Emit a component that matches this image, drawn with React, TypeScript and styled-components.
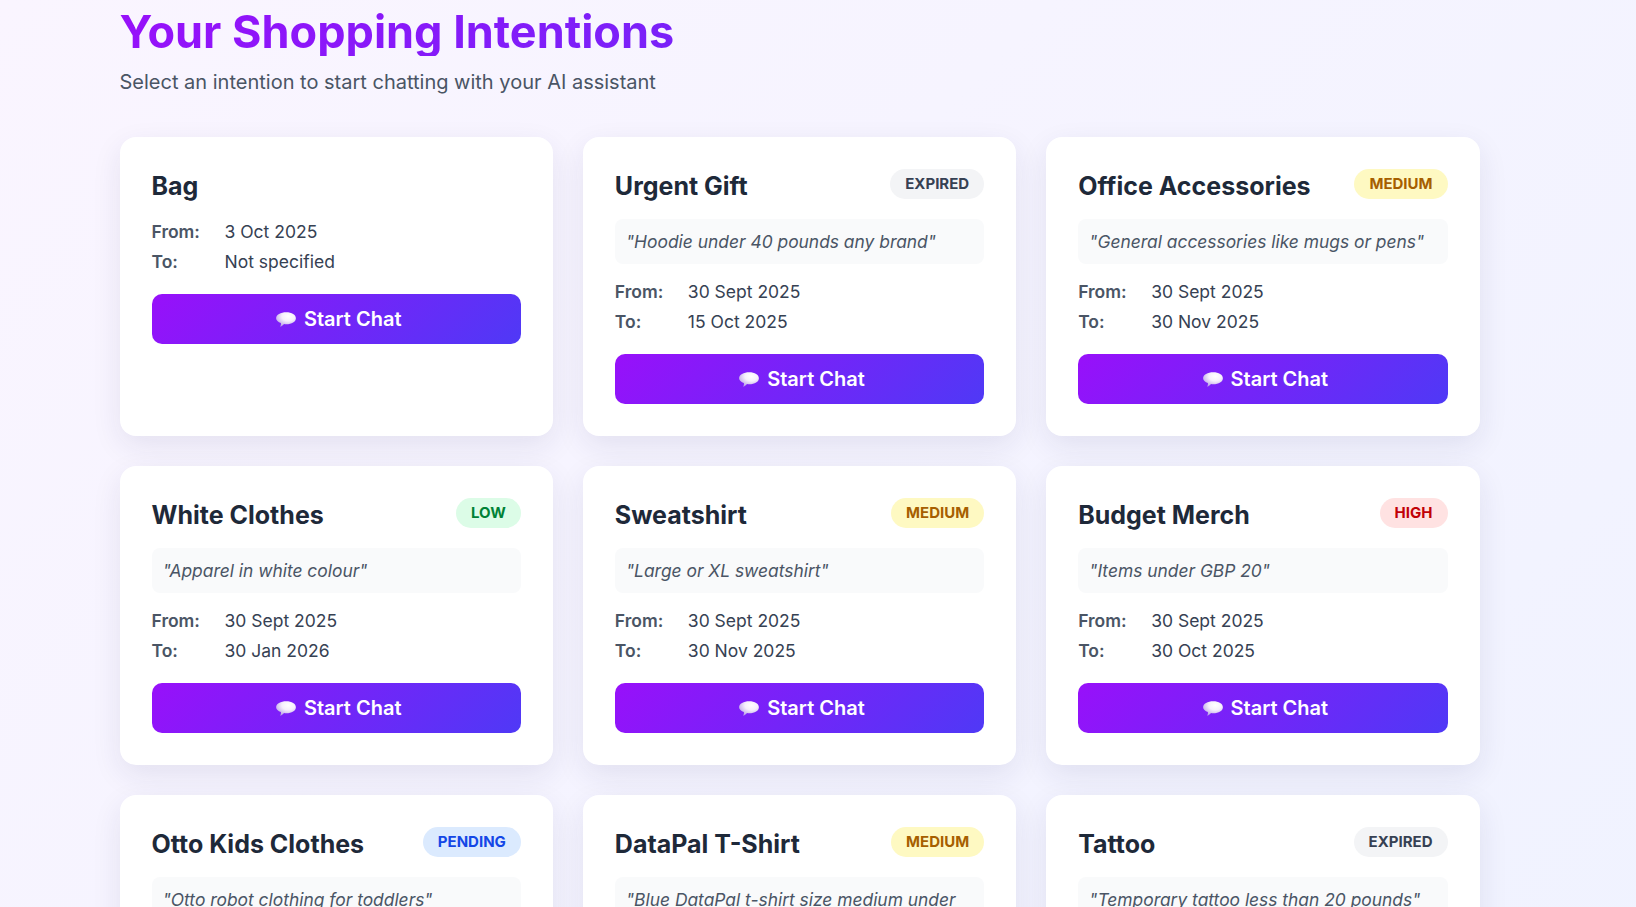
import { createGlobalStyle, styled } from 'styled-components'

type Level = 'expired' | 'medium' | 'low' | 'high' | 'pending'

type Intention = {
  title: string
  level?: Level
  quote?: string
  from?: string
  to?: string
}

const intentions: Intention[] = [
  { title: 'Bag', from: '3 Oct 2025', to: 'Not specified' },
  { title: 'Urgent Gift', level: 'expired', quote: '"Hoodie under 40 pounds any brand"', from: '30 Sept 2025', to: '15 Oct 2025' },
  { title: 'Office Accessories', level: 'medium', quote: '"General accessories like mugs or pens"', from: '30 Sept 2025', to: '30 Nov 2025' },
  { title: 'White Clothes', level: 'low', quote: '"Apparel in white colour"', from: '30 Sept 2025', to: '30 Jan 2026' },
  { title: 'Sweatshirt', level: 'medium', quote: '"Large or XL sweatshirt"', from: '30 Sept 2025', to: '30 Nov 2025' },
  { title: 'Budget Merch', level: 'high', quote: '"Items under GBP 20"', from: '30 Sept 2025', to: '30 Oct 2025' },
  { title: 'Otto Kids Clothes', level: 'pending', quote: '"Otto robot clothing for toddlers"' },
  { title: 'DataPal T-Shirt', level: 'medium', quote: '"Blue DataPal t-shirt size medium under' },
  { title: 'Tattoo', level: 'expired', quote: '"Temporary tattoo less than 20 pounds"' },
]

const badgeColors: Record<Level, { bg: string; fg: string }> = {
  expired: { bg: '#f3f4f6', fg: '#364153' },
  medium: { bg: '#fef9c2', fg: '#a65f00' },
  low: { bg: '#dcfce7', fg: '#008236' },
  high: { bg: '#ffe2e2', fg: '#c10007' },
  pending: { bg: '#dbeafe', fg: '#1447e6' },
}

const ChatBubble = () => (
  <BubbleIcon viewBox="0 0 20 15" aria-hidden="true">
    <defs>
      <radialGradient id="bubbleFill" cx="62%" cy="28%" r="72%">
        <stop offset="0%" stopColor="#ffffff" />
        <stop offset="45%" stopColor="#f6f0fc" />
        <stop offset="100%" stopColor="#bda4e8" />
      </radialGradient>
    </defs>
    <path
      d="M10.2 0.2C15.8 0.2 19.9 2.6 19.9 6.2C19.9 9.8 15.8 12.2 10.2 12.2C9.4 12.2 8.7 12.1 8 12C7.2 13.2 5.9 14.2 4.2 14.8C4.9 13.5 5.1 12.3 4.9 11.1C2.1 10.1 0.1 8.3 0.1 6.2C0.1 2.6 4.6 0.2 10.2 0.2Z"
      fill="url(#bubbleFill)"
    />
  </BubbleIcon>
)

const App = () => {
  return (
    <Page>
      <GlobalStyle />
      <Content>
        <Heading>Your Shopping Intentions</Heading>
        <Subheading>Select an intention to start chatting with your AI assistant</Subheading>
        <Grid>
          {intentions.map((item) => (
            <Card key={item.title}>
              <CardHeader>
                <CardTitle>{item.title}</CardTitle>
                {item.level && <Badge $level={item.level}>{item.level}</Badge>}
              </CardHeader>
              {item.quote && <Quote>{item.quote}</Quote>}
              {item.from && (
                <>
                  <Dates>
                    <DateLabel>From:</DateLabel>
                    <DateValue>{item.from}</DateValue>
                    <DateLabel>To:</DateLabel>
                    <DateValue>{item.to}</DateValue>
                  </Dates>
                  <ChatButton>
                    <ChatBubble />
                    Start Chat
                  </ChatButton>
                </>
              )}
            </Card>
          ))}
        </Grid>
      </Content>
    </Page>
  )
}

export default App

const GlobalStyle = createGlobalStyle`
  html, body {
    margin: 0;
    height: 100%;
    overflow: hidden;
  }
  body {
    font-family: Inter, "Liberation Sans", sans-serif;
  }
`

const Page = styled.div`
  height: 907px;
  overflow: hidden;
  background: linear-gradient(135deg, #faf5ff 0%, #eef2ff 100%) no-repeat;
  background-size: 100% 1500px;
`

const Content = styled.div`
  width: 1360px;
  margin-left: 119.5px;
`

const Heading = styled.h1`
  margin: 0;
  padding-top: 8px;
  font-size: 45px;
  line-height: 48px;
  font-weight: 700;
  background: linear-gradient(135deg, #9810fa 0%, #4f39f6 100%);
  -webkit-background-clip: text;
  background-clip: text;
  color: transparent;
`

const Subheading = styled.p`
  margin: 12px 0 0;
  font-size: 20px;
  line-height: 28px;
  color: #4a5565;
`

const Grid = styled.div`
  display: grid;
  grid-template-columns: repeat(3, 1fr);
  grid-auto-rows: 299px;
  gap: 30px;
  margin-top: 41px;
`

const Card = styled.div`
  box-sizing: border-box;
  padding: 32px;
  background: #fff;
  border-radius: 16px;
  box-shadow: 0 10px 30px rgba(30, 30, 90, 0.09);
`

const CardHeader = styled.div`
  display: flex;
  justify-content: space-between;
  align-items: flex-start;
  gap: 16px;
  margin-bottom: 16px;
`

const CardTitle = styled.h3`
  margin: 0;
  font-size: 25px;
  line-height: 34px;
  font-weight: 700;
  color: #1e2939;
`

const Badge = styled.span<{ $level: Level }>`
  padding: 0 15px;
  height: 30px;
  line-height: 30px;
  border-radius: 15px;
  font-size: 15px;
  font-weight: 700;
  text-transform: uppercase;
  background: ${({ $level }) => badgeColors[$level].bg};
  color: ${({ $level }) => badgeColors[$level].fg};
`

const Quote = styled.div`
  padding: 10px 11.2px;
  margin-bottom: 15px;
  border-radius: 8px;
  background: #f9fafb;
  font-size: 17.4px;
  line-height: 25px;
  font-style: italic;
  color: #4a5565;
`

const Dates = styled.div`
  display: grid;
  grid-template-columns: 73px 1fr;
  grid-auto-rows: 24px;
  row-gap: 6px;
  align-items: center;
  margin-bottom: 21px;
  font-size: 17.5px;
`

const DateLabel = styled.span`
  font-weight: 600;
  color: #4a5565;
`

const DateValue = styled.span`
  color: #364153;
`

const ChatButton = styled.button`
  display: flex;
  align-items: center;
  justify-content: center;
  gap: 8px;
  width: 100%;
  height: 50px;
  padding: 0 0 0 5px;
  border: none;
  border-radius: 10px;
  background: linear-gradient(135deg, #9810fa 0%, #4f39f6 100%);
  color: #fff;
  font-family: inherit;
  font-size: 20px;
  font-weight: 600;
`

const BubbleIcon = styled.svg`
  width: 20px;
  height: 15px;
`
